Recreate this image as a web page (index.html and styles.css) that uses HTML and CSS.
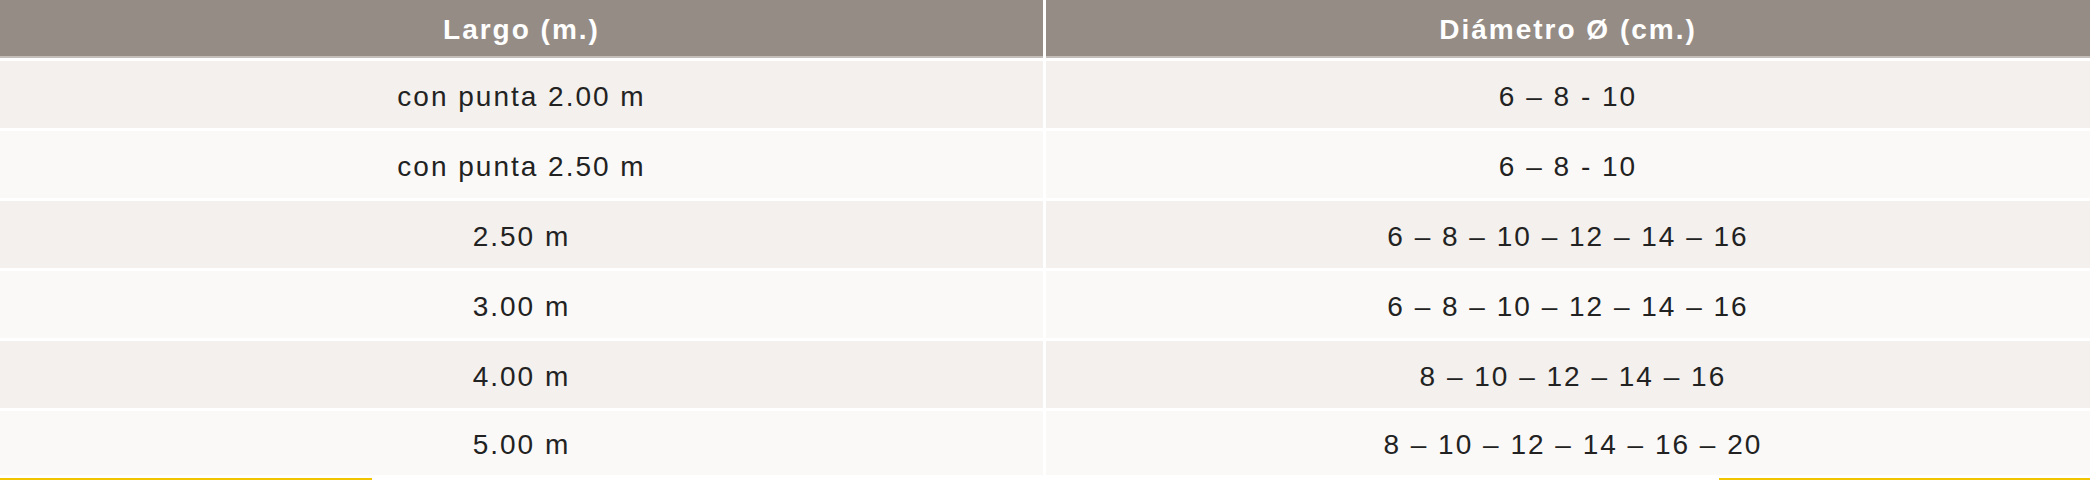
FILE: index.html
```html
<!DOCTYPE html>
<html lang="es">
<head>
<meta charset="utf-8">
<title>Tabla</title>
<link rel="stylesheet" href="styles.css">
</head>
<body>
<div class="page">
  <div class="table">
    <div class="row head">
      <div class="cell">Largo (m.)</div>
      <div class="cell">Diámetro Ø (cm.)</div>
    </div>
    <div class="row odd">
      <div class="cell">con punta 2.00 m</div>
      <div class="cell">6 – 8 - 10</div>
    </div>
    <div class="row even">
      <div class="cell">con punta 2.50 m</div>
      <div class="cell">6 – 8 - 10</div>
    </div>
    <div class="row odd">
      <div class="cell">2.50 m</div>
      <div class="cell">6 – 8 – 10 – 12 – 14 – 16</div>
    </div>
    <div class="row even">
      <div class="cell">3.00 m</div>
      <div class="cell">6 – 8 – 10 – 12 – 14 – 16</div>
    </div>
    <div class="row odd">
      <div class="cell">4.00 m</div>
      <div class="cell">&nbsp;8 – 10 – 12 – 14 – 16</div>
    </div>
    <div class="row even last">
      <div class="cell">5.00 m</div>
      <div class="cell">&nbsp;8 – 10 – 12 – 14 – 16 – 20</div>
    </div>
  </div>
  <div class="rule">
    <span class="bar left"></span>
    <span class="bar right"></span>
  </div>
</div>
</body>
</html>
```
FILE: styles.css
```css
html, body {
  margin: 0;
  padding: 0;
  background: #ffffff;
}
.page {
  width: 2090px;
  height: 480px;
  display: flex;
  flex-direction: column;
  overflow: hidden;
}
.table {
  display: flex;
  flex-direction: column;
  gap: 3px;
  font-family: "Liberation Sans", Arial, Helvetica, sans-serif;
  font-size: 28px;
  letter-spacing: 2px;
  color: #222222;
}
.row {
  display: grid;
  grid-template-columns: 1043px 1044px;
  column-gap: 3px;
  height: 67px;
}
.cell {
  display: flex;
  align-items: center;
  justify-content: center;
  padding-top: 4px;
  box-sizing: border-box;
}
.head {
  height: 58px;
}
.head .cell {
  background: #958c86;
  border-bottom: 2px solid #c4beba;
  color: #ffffff;
  font-weight: bold;
  padding-top: 4px;
}
.odd .cell {
  background: #f3f0ed;
}
.even .cell {
  background: #faf9f7;
}
.last {
  height: 64px;
}
.rule {
  margin-top: auto;
  display: flex;
  justify-content: space-between;
  height: 2px;
}
.bar {
  display: block;
  background: #f2c400;
}
.bar.left {
  width: 372px;
}
.bar.right {
  width: 371px;
}
```
